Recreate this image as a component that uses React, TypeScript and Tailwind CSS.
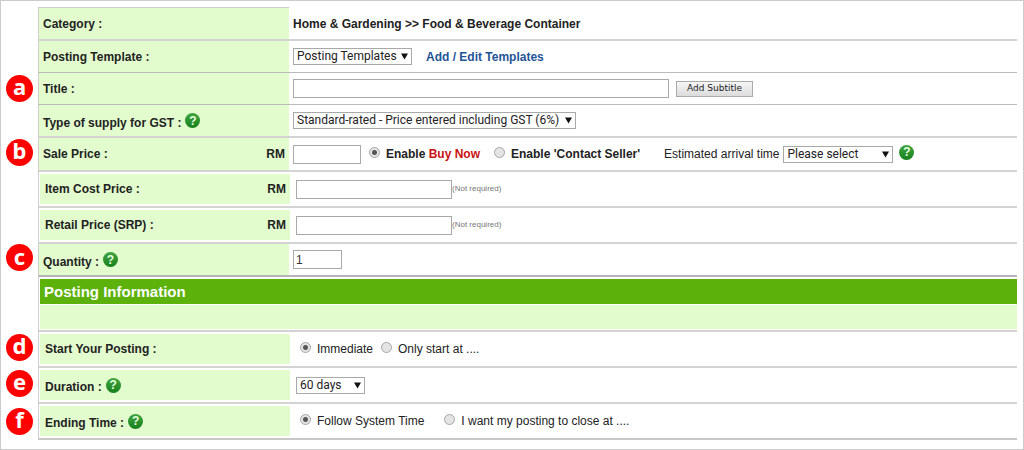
import React from 'react';
import { clsx } from 'clsx';

type RowProps = {
  label: string;
  htmlFor?: string;
  badge?: string;
  badgeClass?: string;
  currency?: boolean;
  help?: boolean;
  inset?: boolean;
  className: string;
  labelClass?: string;
  children: React.ReactNode;
};

const Help: React.FC = () => (
  <button
    type="button"
    aria-label="Help"
    className="flex h-[15px] w-[15px] shrink-0 items-center justify-center rounded-full bg-linear-to-b from-[#3fa53f] to-[#15801a] text-[12px] leading-none font-bold text-[#e8ffe0]"
  >
    ?
  </button>
);

const Badge: React.FC<{ letter: string }> = ({ letter }) => (
  <span className="flex h-[27px] w-[27px] items-center justify-center rounded-full bg-[#fe0000] pb-1 font-['Noto_Sans',sans-serif] text-[22px] leading-none font-bold text-white">
    {letter}
  </span>
);

const Row: React.FC<RowProps> = ({
  label, htmlFor, badge, badgeClass, currency, help, inset, className, labelClass, children,
}) => {
  const text = htmlFor ? <label htmlFor={htmlFor}>{label}</label> : <span>{label}</span>;

  return (
    <div className="flex">
      <div className={clsx('flex w-[37px] shrink-0 items-center justify-center', badgeClass)}>
        {badge && <Badge letter={badge} />}
      </div>
      <div className={clsx('flex min-w-0 flex-1 border-l border-l-[#cfcfcf]', className)}>
        <div className={clsx('flex shrink-0', inset ? 'w-[251px] py-0.5 pl-px' : 'w-[250px]')}>
          <div
            className={clsx(
              'flex flex-1 items-center gap-1 bg-[#e2fcce] pr-1 font-bold',
              inset ? 'pl-[5px]' : 'pl-1',
              labelClass,
            )}
          >
            {text}
            {help && <div className="pb-1"><Help /></div>}
            {currency && <span className="ml-auto">RM</span>}
          </div>
        </div>
        <div className={clsx('flex min-w-0 flex-1 items-center', inset ? 'pl-1.5' : 'pl-1')}>
          {children}
        </div>
      </div>
    </div>
  );
};

const Select: React.FC<{ id: string; value: string; className: string }> = ({ id, value, className }) => (
  <div className={clsx('relative shrink-0', className)}>
    <select
      id={id}
      className="block h-[17px] w-full appearance-none border border-[#a9a9a9] bg-white pl-[3px] font-['Roboto',Arial,sans-serif] text-[12px] leading-[15px] text-[#222]"
    >
      <option>{value}</option>
    </select>
    <svg viewBox="0 0 8 7" className="pointer-events-none absolute top-[5px] right-1 h-[7px] w-[7px]">
      <path d="M0 0h8L4 7z" fill="#111" />
    </svg>
  </div>
);

const Field: React.FC<{ id: string; className: string; value?: string }> = ({ id, className, value }) => (
  <input
    id={id}
    type="text"
    defaultValue={value}
    className={clsx('h-[19px] border border-[#a9a9a9] bg-white px-0.5 text-[12px] text-[#333]', className)}
  />
);

const Radio: React.FC<{ name: string; checked?: boolean; className?: string; children: React.ReactNode }> = ({
  name, checked, className, children,
}) => (
  <label className={clsx('flex shrink-0 items-center gap-1.5', className)}>
    <input
      type="radio"
      name={name}
      defaultChecked={checked}
      className="mb-1 h-[11px] w-[11px] shrink-0 appearance-none rounded-full border border-[#a6a6a6] bg-[#e4e4e4] checked:bg-[radial-gradient(circle,#555_0_2px,#e4e4e4_3px)]"
    />
    {children}
  </label>
);

const NotRequired: React.FC = () => <span className="text-[8px] text-[#777]">(Not required)</span>;

export default function App() {
  return (
    <form className="border border-[#ccc] bg-white pt-1.5 pr-1.5 pb-[9px] font-['Liberation_Sans',Arial,sans-serif] text-[12px] leading-4 text-[#222]">
      <div className="ml-[37px] w-[251px] border-t border-[#cfcfcf]" />
      <Row label="Category :" className="min-h-[33px] border-b-2 border-b-[#d3d3d3]">
        <span className="font-bold">Home &amp; Gardening &gt;&gt; Food &amp; Beverage Container</span>
      </Row>
      <Row label="Posting Template :" htmlFor="template" className="min-h-8 border-b border-b-[#bbb]">
        <Select id="template" value="Posting Templates" className="w-[119px]" />
        <a href="#templates" className="ml-3.5 font-bold text-[#1f5597]">Add / Edit Templates</a>
      </Row>
      <Row label="Title :" htmlFor="title" badge="a" badgeClass="pb-0.5" className="min-h-8 border-b border-b-[#bbb]">
        <Field id="title" className="w-[376px]" />
        <button
          type="button"
          className="ml-[7px] h-4 w-[77px] border border-[#aaa] bg-linear-to-b from-[#f6f6f6] to-[#dcdcdc] font-['DejaVu_Sans',sans-serif] text-[9px] leading-none"
        >
          Add Subtitle
        </button>
      </Row>
      <Row
        label="Type of supply for GST :"
        htmlFor="gst"
        help
        className="min-h-[33px] border-b-2 border-b-[#d3d3d3]"
        labelClass="pt-1"
      >
        <Select id="gst" value="Standard-rated - Price entered including GST (6%)" className="w-[283px]" />
      </Row>
      <Row
        label="Sale Price :"
        htmlFor="sale"
        badge="b"
        badgeClass="pb-1.5"
        currency
        className="min-h-[34px] border-b-2 border-b-[#d3d3d3]"
      >
        <Field id="sale" className="w-[68px]" />
        <Radio name="sale-mode" checked className="ml-2 font-bold">
          <span>Enable <span className="text-[#c91111]">Buy Now</span></span>
        </Radio>
        <Radio name="sale-mode" className="ml-3.5 font-bold">Enable 'Contact Seller'</Radio>
        <label htmlFor="arrival" className="ml-6 shrink-0">Estimated arrival time</label>
        <div className="ml-1 flex items-center gap-1.5">
          <Select id="arrival" value="Please select" className="w-[110px]" />
          <div className="pb-1"><Help /></div>
        </div>
      </Row>
      <Row label="Item Cost Price :" htmlFor="cost" currency inset className="min-h-9 border-b-2 border-b-[#d3d3d3]">
        <Field id="cost" className="w-[156px]" />
        <NotRequired />
      </Row>
      <Row label="Retail Price (SRP) :" htmlFor="retail" currency inset className="min-h-9 border-b-2 border-b-[#d3d3d3]">
        <Field id="retail" className="w-[156px]" />
        <NotRequired />
      </Row>
      <Row
        label="Quantity :"
        htmlFor="quantity"
        badge="c"
        badgeClass="pb-1.5"
        help
        className="min-h-[33px] border-b-2 border-b-[#b5b5b9]"
        labelClass="pt-1"
      >
        <Field id="quantity" value="1" className="w-[49px]" />
      </Row>

      <div className="ml-[37px] border-b-2 border-l border-b-[#d3d3d3] border-l-[#cfcfcf] pt-0.5 pb-px pl-px">
        <h2 className="bg-[#5cb20a] px-1 text-[15px] leading-[25px] font-bold text-white">Posting Information</h2>
        <div className="mt-px h-6 bg-[#e2fcce]" />
      </div>

      <Row
        label="Start Your Posting :"
        badge="d"
        badgeClass="pb-1.5"
        inset
        className="min-h-9 border-b-2 border-b-[#d3d3d3]"
      >
        <Radio name="start" checked className="ml-1">Immediate</Radio>
        <Radio name="start" className="ml-2">Only start at ....</Radio>
      </Row>
      <Row
        label="Duration :"
        htmlFor="duration"
        badge="e"
        badgeClass="pb-1.5"
        help
        inset
        className="min-h-9 border-b-2 border-b-[#d3d3d3]"
        labelClass="pt-1"
      >
        <Select id="duration" value="60 days" className="w-[69px]" />
      </Row>
      <Row
        label="Ending Time :"
        badge="f"
        badgeClass="pb-0.5"
        help
        inset
        className="min-h-9 border-b-2 border-b-[#c8c8c8]"
        labelClass="pt-1"
      >
        <Radio name="ending" checked className="ml-1">Follow System Time</Radio>
        <Radio name="ending" className="ml-5">I want my posting to close at ....</Radio>
      </Row>
    </form>
  );
}
